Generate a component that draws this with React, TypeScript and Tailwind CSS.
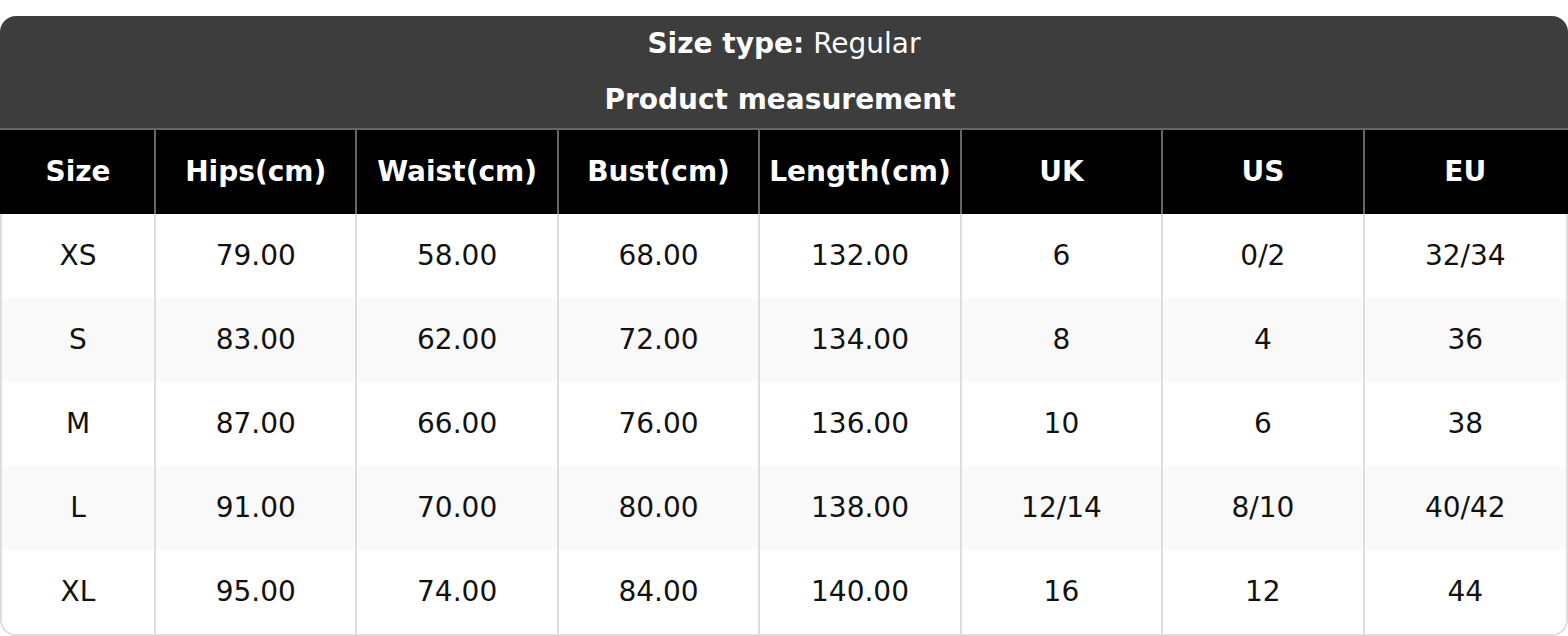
import React from "react";

type Row = {
  size: string;
  hips: string;
  waist: string;
  bust: string;
  length: string;
  uk: string;
  us: string;
  eu: string;
};

const columns = ["Size", "Hips(cm)", "Waist(cm)", "Bust(cm)", "Length(cm)", "UK", "US", "EU"];

const rows: Row[] = [
  { size: "XS", hips: "79.00", waist: "58.00", bust: "68.00", length: "132.00", uk: "6", us: "0/2", eu: "32/34" },
  { size: "S", hips: "83.00", waist: "62.00", bust: "72.00", length: "134.00", uk: "8", us: "4", eu: "36" },
  { size: "M", hips: "87.00", waist: "66.00", bust: "76.00", length: "136.00", uk: "10", us: "6", eu: "38" },
  { size: "L", hips: "91.00", waist: "70.00", bust: "80.00", length: "138.00", uk: "12/14", us: "8/10", eu: "40/42" },
  { size: "XL", hips: "95.00", waist: "74.00", bust: "84.00", length: "140.00", uk: "16", us: "12", eu: "44" },
];

const SizeChart = () => {
  return (
    <div className="rounded-t-2xl overflow-hidden">
      {/* title block */}
      <div className="bg-[#3d3d3d] text-white text-center">
        <div className="h-[56px] flex items-center justify-center">
          <span className="font-bold">Size type:</span>
          <span className="ml-[9px]">Regular</span>
        </div>
        <div className="h-[56px] flex items-center justify-center pr-[8px] font-bold">
          Product measurement
        </div>
      </div>

      {/* column headers */}
      <div className="bg-black border-t-2 border-[#666] px-[2px] grid grid-cols-[154px_repeat(7,1fr)]">
        {columns.map((c, i) => (
          <div
            key={c}
            className={
              "h-[84px] flex items-center justify-center font-bold text-white " +
              (i < columns.length - 1 ? "border-r-2 border-[#666]" : "")
            }
          >
            {c}
          </div>
        ))}
      </div>

      {/* body */}
      <div className="border-x-2 border-b-2 border-[#ddd] rounded-b-2xl overflow-hidden">
        {rows.map((r, idx) => {
          const cells = [r.size, r.hips, r.waist, r.bust, r.length, r.uk, r.us, r.eu];
          return (
            <div
              key={r.size}
              className={
                "grid grid-cols-[154px_repeat(7,1fr)] " +
                (idx % 2 === 1 ? "bg-[#f9f9f9]" : "bg-white")
              }
            >
              {cells.map((v, i) => (
                <div
                  key={i}
                  className={
                    "h-[84px] flex items-center justify-center text-[#111] " +
                    (i < cells.length - 1 ? "border-r-2 border-[#ddd]" : "")
                  }
                >
                  {v}
                </div>
              ))}
            </div>
          );
        })}
      </div>
    </div>
  );
};

export default function App() {
  return (
    <div className="bg-white pt-4 text-[28px] leading-none font-['DejaVu_Sans',sans-serif]">
      <SizeChart />
    </div>
  );
}
